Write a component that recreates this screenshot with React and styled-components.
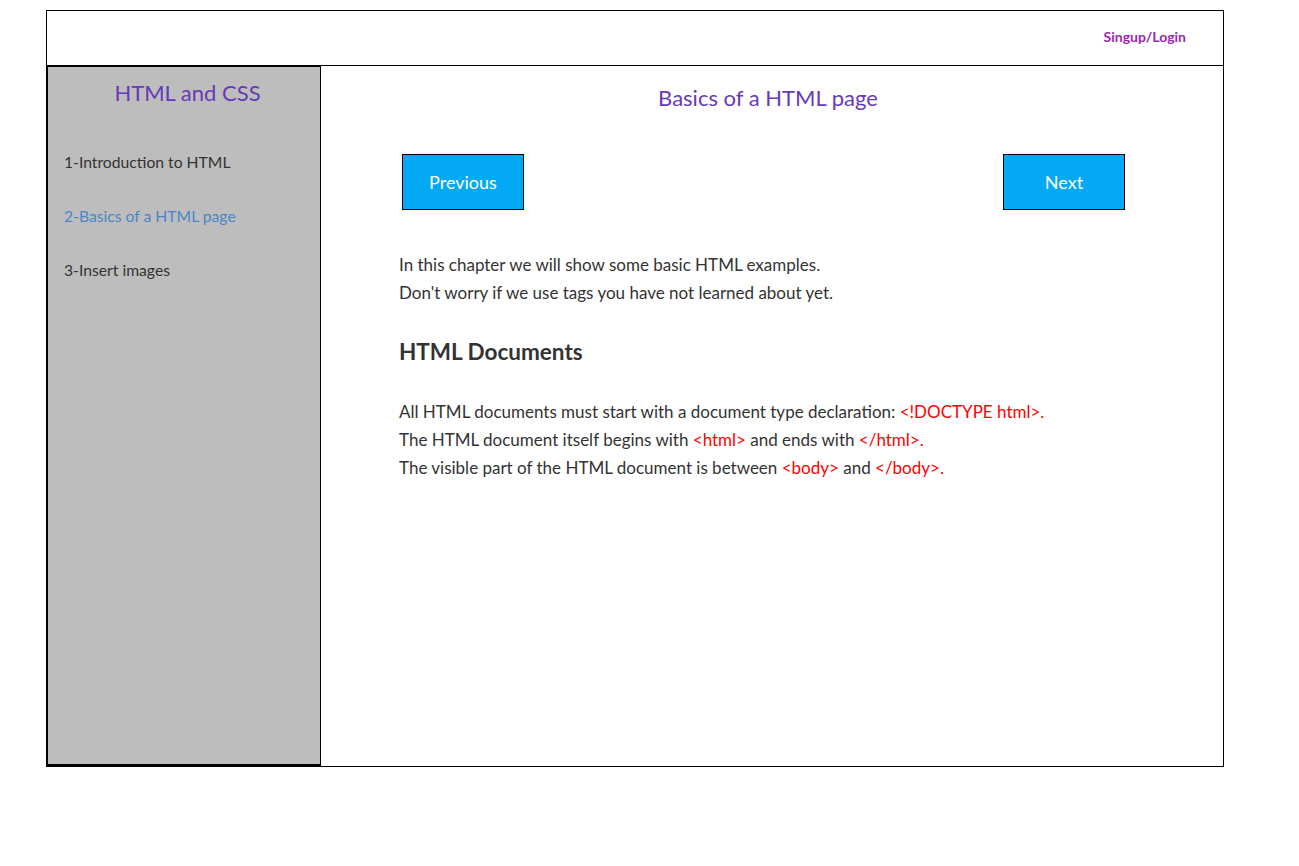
import React from "react";
import styled, { createGlobalStyle } from "styled-components";

const Global = createGlobalStyle`
  html, body { margin: 0; padding: 0; background: #fff; }
  body { font-family: "Source Sans Pro", Lato, "Liberation Sans", sans-serif; color: #333; }
  * { box-sizing: border-box; }
`;

const Page = styled.div`
  padding: 10px 0 0 46px;
`;

const Frame = styled.div`
  width: 1178px;
  border: 1px solid #000;
  display: flex;
  flex-direction: column;
`;

const Header = styled.header`
  height: 55px;
  border-bottom: 1px solid #000;
  display: flex;
  align-items: center;
  justify-content: flex-end;
  padding: 0 37px 4px 0;
`;

const AuthLink = styled.a`
  font-size: 14px;
  font-weight: 700;
  color: #9c27b0;
  text-decoration: none;
`;

const Body = styled.div`
  height: 700px;
  display: flex;
`;

const Sidebar = styled.aside`
  width: 275px;
  flex: none;
  background: #bdbdbd;
  border: 1px solid #000;
  border-left-width: 2px;
  border-bottom-width: 2px;
  margin-left: -1px;
  padding: 12px 0 0 16px;
`;

const SideTitle = styled.h2`
  margin: 0 0 45px;
  padding-right: 9px;
  text-align: center;
  font-size: 22px;
  font-weight: 400;
  color: #673ab7;
`;

const NavList = styled.ul`
  list-style: none;
  margin: 0;
  padding: 0;
  display: flex;
  flex-direction: column;
  gap: 32px;
`;

const NavItem = styled.li`
  font-size: 15.7px;
  line-height: 22px;
  color: ${(p) => (p.$active ? "#4a86c8" : "#333")};
`;

const Main = styled.main`
  flex: 1;
  padding: 16px 98px 0 78px;
`;

const PageTitle = styled.h1`
  margin: 0 0 40px;
  padding-left: 12px;
  text-align: center;
  font-size: 22px;
  font-weight: 400;
  color: #673ab7;
  line-height: 32px;
`;

const NavButtons = styled.div`
  display: flex;
  justify-content: space-between;
  padding: 0 0 0 3px;
  margin-bottom: 41px;
`;

const Button = styled.button`
  width: 122px;
  height: 56px;
  background: #03a9f4;
  border: 1px solid #000;
  color: #fff;
  font-family: inherit;
  font-size: 18px;
`;

const Para = styled.p`
  margin: 0;
  font-size: 17px;
  line-height: 28px;
  color: #333;
`;

const Heading = styled.h3`
  margin: 31px 0 33px;
  font-size: 22.5px;
  font-weight: 700;
  color: #333;
`;

const Code = styled.span`
  color: #f00;
`;

export default function App() {
  return (
    <>
      <Global />
      <Page>
        <Frame>
          <Header>
            <AuthLink href="#">Singup/Login</AuthLink>
          </Header>
          <Body>
            <Sidebar>
              <SideTitle>HTML and CSS</SideTitle>
              <NavList>
                <NavItem>1-Introduction to HTML</NavItem>
                <NavItem $active>2-Basics of a HTML page</NavItem>
                <NavItem>3-Insert images</NavItem>
              </NavList>
            </Sidebar>
            <Main>
              <PageTitle>Basics of a HTML page</PageTitle>
              <NavButtons>
                <Button>Previous</Button>
                <Button>Next</Button>
              </NavButtons>
              <Para>
                In this chapter we will show some basic HTML examples.
                <br />
                Don't worry if we use tags you have not learned about yet.
              </Para>
              <Heading>HTML Documents</Heading>
              <Para>
                All HTML documents must start with a document type declaration:{" "}
                <Code>&lt;!DOCTYPE html&gt;.</Code>
                <br />
                The HTML document itself begins with <Code>&lt;html&gt;</Code> and ends with{" "}
                <Code>&lt;/html&gt;.</Code>
                <br />
                The visible part of the HTML document is between <Code>&lt;body&gt;</Code> and{" "}
                <Code>&lt;/body&gt;.</Code>
              </Para>
            </Main>
          </Body>
        </Frame>
      </Page>
    </>
  );
}
